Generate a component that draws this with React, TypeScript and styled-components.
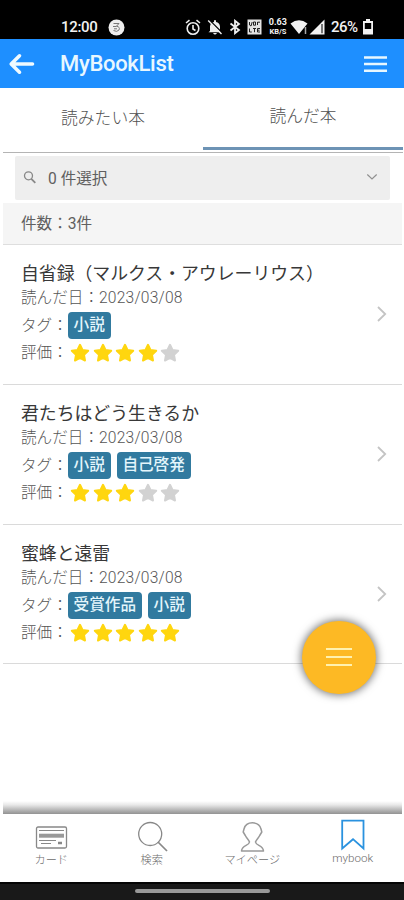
import React from "react";
import styled, { createGlobalStyle } from "styled-components";

const GlobalStyle = createGlobalStyle`
  * { box-sizing: border-box; }
  body {
    margin: 0;
    background: #fff;
    font-family: Roboto, "Noto Sans CJK JP", sans-serif;
    color: #555;
  }
`;

const Screen = styled.div`
  position: relative;
  display: flex;
  flex-direction: column;
  width: 404px;
  height: 900px;
  overflow: hidden;
  background: #fff;
  white-space: nowrap;
`;

const StatusBar = styled.div`
  display: flex;
  align-items: flex-end;
  justify-content: space-between;
  height: 39px;
  padding: 0 30px 3px 61px;
  background: #000;
  color: #f2f2f2;
  font-size: 15px;
  font-weight: 500;
  line-height: 17px;
`;

const StatusGroup = styled.div<{ $gap: number }>`
  display: flex;
  align-items: center;
  height: 18px;
  gap: ${(p) => p.$gap}px;
`;

const StatusClock = styled.span`
  letter-spacing: -0.3px;
`;

const BatteryText = styled.span`
  margin: 0 2px 0 3px;
  letter-spacing: -0.5px;
`;

const Header = styled.header`
  display: flex;
  align-items: center;
  height: 49px;
  padding: 0 17px 0 8px;
  background: #1e8fff;
  color: #e8f7ff;
`;

const HeaderTitle = styled.h1`
  flex: 1;
  margin: 0 0 0 25px;
  font-size: 22px;
  font-weight: 500;
  line-height: 28px;
  letter-spacing: -0.3px;
`;

const Tabs = styled.nav`
  display: grid;
  grid-template-columns: 200px 200px;
  height: 65px;
  margin: 0 1px 0 3px;
  border-bottom: 1px solid #b4b4b4;
`;

const Tab = styled.div<{ $active?: boolean }>`
  display: flex;
  align-items: center;
  justify-content: center;
  height: 62px;
  padding-bottom: ${(p) => (p.$active ? 5 : 4)}px;
  border-bottom: ${(p) => (p.$active ? "3px solid #6d93b5" : "0")};
  color: #505050;
  font-size: 16.8px;
  font-weight: 300;
`;

const SearchBox = styled.div`
  display: flex;
  align-items: center;
  height: 44px;
  margin: 3px 14px 3px 15px;
  padding: 0 12px 2px 8px;
  background: #eee;
  border-radius: 2px;
  font-size: 15.6px;
`;

const SearchLabel = styled.span`
  flex: 1;
  margin-left: 12px;
  color: #606060;
`;

const CountBar = styled.div`
  display: flex;
  align-items: center;
  height: 42px;
  margin: 0 2px 0 3px;
  padding: 0 18px 4px;
  background: #f5f5f5;
  border-bottom: 1px solid #dedede;
  color: #606060;
  font-size: 15.6px;
`;

const BookList = styled.main`
  flex: 1;
  margin: 0 2px 0 3px;
`;

const BookRow = styled.article`
  display: flex;
  align-items: center;
  height: 139.75px;
  padding: 0 14px 0 18px;
  border-bottom: 1px solid #dadada;
`;

const BookInfo = styled.div`
  flex: 1;
  align-self: flex-start;
  padding-top: 17px;
`;

const BookTitle = styled.h2`
  margin: 0;
  color: #383838;
  font-size: 17.9px;
  font-weight: 400;
  line-height: 24px;
  letter-spacing: -0.05px;
  font-feature-settings: "halt" 0;
`;

const InfoLine = styled.div<{ $height: number }>`
  display: flex;
  align-items: center;
  height: ${(p) => p.$height}px;
  color: #555;
  font-size: 15.6px;
  font-weight: 300;
  line-height: 24px;
`;

const DateText = styled.span`
  letter-spacing: 0.2px;
`;

const Badge = styled.span`
  height: 27px;
  margin: -1px 6px 0 0;
  padding: 0 5.8px;
  border-radius: 4px;
  background: #317a9f;
  color: #e4f6fc;
  font-weight: 500;
  line-height: 26px;
`;

const Stars = styled.div`
  display: flex;
  gap: 2.5px;
  padding-left: 2.5px;
`;

const Fab = styled.button`
  position: absolute;
  left: 302px;
  top: 620.5px;
  display: flex;
  align-items: center;
  justify-content: center;
  width: 73.5px;
  height: 73.5px;
  padding: 0;
  border: 0;
  border-radius: 50%;
  background: #fdb924;
  box-shadow: 0 0 8px 1px rgba(0, 0, 0, 0.55);
`;

const NavShade = styled.div`
  height: 13px;
  margin: 0 2px 0 3px;
  background: linear-gradient(#fff 0%, #e8e8e8 30%, #b5b5b5 70%, #929292 100%);
`;

const BottomNav = styled.nav`
  display: grid;
  grid-template-columns: repeat(4, 100.5px);
  height: 68px;
  padding-left: 1px;
`;

const NavItem = styled.div`
  display: flex;
  flex-direction: column;
  align-items: center;
  padding-top: 5px;
`;

const NavLabel = styled.span<{ $latin?: boolean }>`
  margin-top: ${(p) => (p.$latin ? -2 : 1)}px;
  color: #6c6c6c;
  font-size: ${(p) => (p.$latin ? 11.6 : 11.2)}px;
  font-weight: 300;
  line-height: 16px;
`;

const GestureBar = styled.div`
  display: flex;
  align-items: center;
  justify-content: center;
  height: 18px;
  padding-bottom: 2px;
  border-top: 2px solid #050505;
  background: #191919;
`;

const GestureHandle = styled.div`
  width: 135px;
  height: 4px;
  border-radius: 2px;
  background: #999;
`;

const STAR_PATH =
  "M10 1.8 L12.5 7 L18.2 7.8 L14 11.9 L15 17.5 L10 14.9 L5 17.5 L6 11.9 L1.8 7.8 L7.5 7 Z";

const Star = ({ on }: { on: boolean }) => {
  const color = on ? "#ffd60f" : "#d2d2d2";
  return (
    <svg width="20" height="20" viewBox="0 0 20 20">
      <path d={STAR_PATH} fill={color} stroke={color} strokeWidth="2" strokeLinejoin="round" />
    </svg>
  );
};

const Chevron = () => (
  <svg width="12" height="18" viewBox="0 0 12 18" fill="none" stroke="#c4c4c4" strokeWidth="1.8">
    <path d="M2 2 L9.2 9 L2 16" />
  </svg>
);

const MessageDot = () => (
  <svg width="17" height="17" viewBox="0 0 17 17">
    <circle cx="8.5" cy="8.5" r="8" fill="#eee" />
    <path d="M5.5 4.5 H11 L8.5 7.2 Q12.5 8 11 11 Q9 13.5 5.5 11.5 M5 7.5 H8.5 M6 9.8 H9" fill="none" stroke="#777" strokeWidth="1" />
  </svg>
);

const AlarmIcon = () => (
  <svg width="16" height="17" viewBox="0 0 16 17" fill="none" stroke="#eee" strokeWidth="1.6">
    <circle cx="8" cy="9.5" r="5.8" />
    <path d="M8 6 V10 L10.5 11.5 M1 4 L4.5 1.2 M11.5 1.2 L15 4" />
  </svg>
);

const BellOffIcon = () => (
  <svg width="16" height="16" viewBox="0 0 16 16">
    <path d="M3 12 V7.5 Q3.4 3.5 7 3 V1.2 H9 V3 Q12.6 3.5 13 7.5 V12 L14.5 13.2 H1.5 Z M6 14 H10 Q8 17 6 14" fill="#eee" />
    <path d="M2.6 1.2 L15.2 13.8" stroke="#000" strokeWidth="1.3" />
    <path d="M1.2 1.6 L14.5 15" stroke="#eee" strokeWidth="1.4" />
  </svg>
);

const BluetoothIcon = () => (
  <svg width="12" height="16" viewBox="0 0 12 16" fill="none" stroke="#eee" strokeWidth="1.8">
    <path d="M1.5 4.5 L10 11 L6 14.2 V1.8 L10 5 L1.5 11.5" />
  </svg>
);

const VolteIcon = () => (
  <svg width="15" height="16" viewBox="0 0 15 16">
    <rect x="0.5" y="0.5" width="14" height="15" fill="#e4e4e4" />
    <path d="M2.5 3 V6 L4 7 L5.2 3 M6.5 3 H8.5 V6.2 H6.5 Z M10.5 3 V6 M10.5 3.2 H13 M2.5 9.5 V13 H4.8 M6 9.5 H9 M7.5 9.5 V13.2 M13 9.5 H10.5 V13 H13 M10.5 11.2 H12.5" stroke="#222" fill="none" />
  </svg>
);

const SpeedBox = styled.div`
  display: flex;
  flex-direction: column;
  align-items: center;
  width: 20px;
  font-size: 9px;
  font-weight: 700;
  line-height: 9px;
`;

const SpeedUnit = styled.span`
  font-size: 7.5px;
`;

const WifiIcon = () => (
  <svg width="18" height="16" viewBox="0 0 18 16">
    <path d="M0.5 4.5 Q9 -2 17.5 4.5 L9 15 Z" fill="#f2f2f2" />
    <path d="M15.5 8 V15" stroke="#aaa" strokeWidth="1.5" />
  </svg>
);

const SignalIcon = () => (
  <svg width="16" height="16" viewBox="0 0 16 16">
    <path d="M0.5 15.5 L15.5 0.5 V15.5 Z" fill="#f2f2f2" />
    <path d="M13 5 V14.2" stroke="#555" strokeWidth="1.6" />
  </svg>
);

const BatteryIcon = () => (
  <svg width="12" height="16" viewBox="0 0 12 16">
    <path d="M4 0 H8 V2 H11 V15.5 H1 V2 H4 Z" fill="#f2f2f2" />
    <rect x="2.8" y="4" width="6.4" height="6" fill="#000" />
  </svg>
);

const BackIcon = () => (
  <svg width="27" height="22" viewBox="0 0 27 22" fill="none" stroke="#f0faff" strokeWidth="3.6" strokeLinecap="round" strokeLinejoin="round">
    <path d="M11.5 2.8 L3.2 11 L11.5 19.2 M4 11 H24.5" />
  </svg>
);

const MenuIcon = () => (
  <svg width="23" height="18" viewBox="0 0 23 18" stroke="#e8f7ff" strokeWidth="2.6">
    <path d="M0 2.5 H23 M0 9 H23 M0 15.8 H23" />
  </svg>
);

const FabMenuIcon = () => (
  <svg width="26" height="20" viewBox="0 0 26 20" stroke="#fff1ae" strokeWidth="2">
    <path d="M0 2 H26 M0 10 H26 M0 18 H26" />
  </svg>
);

const SmallSearchIcon = () => (
  <svg width="13" height="14" viewBox="0 0 13 14" fill="none" stroke="#888" strokeWidth="1.3">
    <circle cx="5.5" cy="5.8" r="4" />
    <path d="M8.3 8.8 L12.3 12.8" strokeWidth="1.8" />
  </svg>
);

const DownIcon = () => (
  <svg width="12" height="8" viewBox="0 0 12 8" fill="none" stroke="#909090" strokeWidth="1.2">
    <path d="M1.3 1.5 L6 6 L10.7 1.5" />
  </svg>
);

const CardIcon = () => (
  <svg width="34" height="33" viewBox="0 0 34 33" fill="none" stroke="#888">
    <rect x="2.5" y="8" width="30" height="21" rx="1.5" strokeWidth="1.3" />
    <path d="M5 11.5 H30" strokeWidth="1" />
    <path d="M5 16.7 H30" strokeWidth="4" stroke="#999" />
    <path d="M5 21.5 H22 M7 24.5 H17" strokeWidth="1" />
    <path d="M24 24 H28" strokeWidth="2.5" />
  </svg>
);

const FindIcon = () => (
  <svg width="34" height="33" viewBox="0 0 34 33" fill="none" stroke="#888" strokeWidth="1.3">
    <circle cx="15.2" cy="15" r="11.5" />
    <path d="M23 23 L32 32" strokeWidth="1.7" />
  </svg>
);

const PersonIcon = () => (
  <svg width="34" height="33" viewBox="0 0 34 33" fill="none" stroke="#999" strokeWidth="1.5" strokeLinejoin="round">
    <path d="M14.5 23 C14 21 11.5 19 10.3 16.5 L8.2 13 L9 10 C11 1.8 24 1.8 26 10 L26.8 13 L24.7 16.5 C23.5 19 21 21 20.5 23 C21 27 28 26 28.5 32 H6.5 C7 26 14 27 14.5 23 Z" />
  </svg>
);

const BookmarkIcon = () => (
  <svg width="34" height="33" viewBox="0 0 34 33" fill="none" stroke="#2a92df" strokeWidth="1.8">
    <path d="M6.2 1.7 H27.5 V29.5 L17 20.2 L6.2 29.5 Z" />
  </svg>
);

interface Book {
  title: string;
  date: string;
  tags: string[];
  rating: number;
}

const books: Book[] = [
  { title: "自省録（マルクス・アウレーリウス）", date: "2023/03/08", tags: ["小説"], rating: 4 },
  { title: "君たちはどう生きるか", date: "2023/03/08", tags: ["小説", "自己啓発"], rating: 3 },
  { title: "蜜蜂と遠雷", date: "2023/03/08", tags: ["受賞作品", "小説"], rating: 5 },
];

export default function App() {
  return (
    <Screen>
      <GlobalStyle />
      <StatusBar>
        <StatusGroup $gap={10}>
          <StatusClock>12:00</StatusClock>
          <MessageDot />
        </StatusGroup>
        <StatusGroup $gap={2.5}>
          <StatusGroup $gap={6}>
            <AlarmIcon />
            <BellOffIcon />
            <BluetoothIcon />
            <VolteIcon />
            <SpeedBox>
              <span>0.63</span>
              <SpeedUnit>KB/S</SpeedUnit>
            </SpeedBox>
          </StatusGroup>
          <StatusGroup $gap={1}>
            <WifiIcon />
            <SignalIcon />
          </StatusGroup>
          <BatteryText>26%</BatteryText>
          <BatteryIcon />
        </StatusGroup>
      </StatusBar>
      <Header>
        <BackIcon />
        <HeaderTitle>MyBookList</HeaderTitle>
        <MenuIcon />
      </Header>
      <Tabs>
        <Tab>読みたい本</Tab>
        <Tab $active>読んだ本</Tab>
      </Tabs>
      <SearchBox>
        <SmallSearchIcon />
        <SearchLabel>0 件選択</SearchLabel>
        <DownIcon />
      </SearchBox>
      <CountBar>件数：3件</CountBar>
      <BookList>
        {books.map((book) => (
          <BookRow key={book.title}>
            <BookInfo>
              <BookTitle>{book.title}</BookTitle>
              <InfoLine $height={24}>
                読んだ日：<DateText>{book.date}</DateText>
              </InfoLine>
              <InfoLine $height={32}>
                タグ：
                {book.tags.map((tag) => (
                  <Badge key={tag}>{tag}</Badge>
                ))}
              </InfoLine>
              <InfoLine $height={22}>
                評価：
                <Stars>
                  {[1, 2, 3, 4, 5].map((n) => (
                    <Star key={n} on={n <= book.rating} />
                  ))}
                </Stars>
              </InfoLine>
            </BookInfo>
            <Chevron />
          </BookRow>
        ))}
      </BookList>
      <NavShade />
      <BottomNav>
        <NavItem><CardIcon /><NavLabel>カード</NavLabel></NavItem>
        <NavItem><FindIcon /><NavLabel>検索</NavLabel></NavItem>
        <NavItem><PersonIcon /><NavLabel>マイページ</NavLabel></NavItem>
        <NavItem><BookmarkIcon /><NavLabel $latin>mybook</NavLabel></NavItem>
      </BottomNav>
      <GestureBar>
        <GestureHandle />
      </GestureBar>
      <Fab aria-label="menu">
        <FabMenuIcon />
      </Fab>
    </Screen>
  );
}
